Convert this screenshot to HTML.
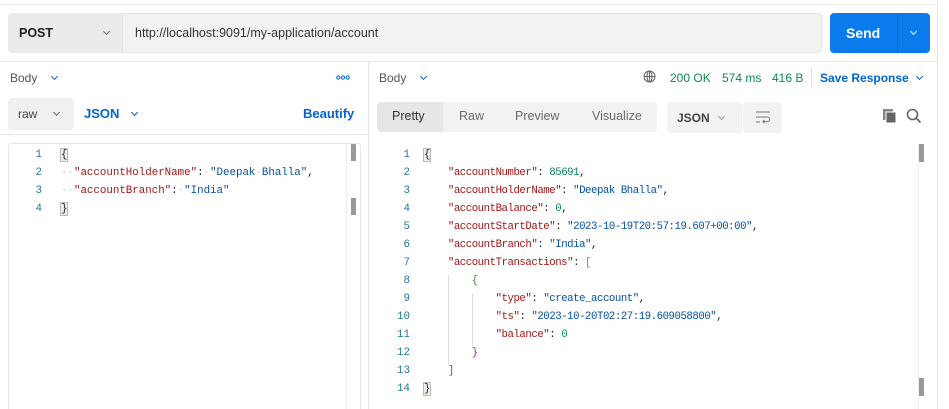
<!DOCTYPE html>
<html><head><style>
*{margin:0;padding:0;box-sizing:border-box}
body{width:949px;height:409px;background:#fff;position:relative;overflow:hidden;font-family:"Liberation Sans",sans-serif;font-size:12px;color:#212121}
.a{position:absolute}
.mono{font-family:"Liberation Mono",monospace;font-size:10.8px;white-space:pre}
.k{color:#a31515}.s{color:#0451a5}.n{color:#098658}.ln{color:#237893;text-align:right;width:30px;letter-spacing:0}
.chev{display:block;width:5px;height:5px;border-right:1.1px solid #6b6b6b;border-bottom:1.1px solid #6b6b6b;transform:rotate(45deg)}
.bchev{border-color:#0265d2}
.tab{position:absolute;top:0;height:29px;line-height:29px;font-size:12.5px;color:#6b6b6b}
</style></head><body>
<div class="a" style="left:0;top:4px;width:937px;height:1px;background:#ececec"></div>
<div class="a" style="left:937px;top:0;width:1px;height:409px;background:#e6e6e6"></div>
<div class="a" style="left:8px;top:13px;width:814px;height:40px;background:#f2f2f2;border:1px solid #e4e4e4;border-radius:4px"></div>
<div class="a" style="left:8px;top:13px;width:115px;height:40px;background:#ebebeb;border-radius:4px 0 0 4px;border-right:1px solid #e0e0e0"></div>
<div class="a" style="left:19px;top:26px;font-weight:bold;font-size:12.5px;color:#212121">POST</div>
<div class="a" style="left:104px;top:29px"><span class="chev"></span></div>
<div class="a" style="left:135px;top:26px;font-size:12.5px;color:#333">http://localhost:9091/my-application/account</div>
<div class="a" style="left:830px;top:13px;width:100px;height:40px;background:#097bed;border-radius:4px"></div>
<div class="a" style="left:897px;top:13px;width:1px;height:40px;background:#0867cc"></div>
<div class="a" style="left:846px;top:25px;font-weight:bold;font-size:14px;color:#fff">Send</div>
<div class="a" style="left:911px;top:29px"><span class="chev" style="border-color:#fff"></span></div>
<div class="a" style="left:0;top:61px;width:937px;height:1px;background:#e6e6e6"></div>
<div class="a" style="left:368px;top:62px;width:1px;height:347px;background:#e6e6e6"></div>
<div class="a" style="left:10px;top:71px;color:#555">Body</div>
<div class="a" style="left:52px;top:74px"><span class="chev bchev"></span></div>
<svg class="a" style="left:336px;top:75px" width="14" height="5" viewBox="0 0 14 5" fill="none" stroke="#0265d2" stroke-width="1"><circle cx="2.3" cy="2.5" r="1.6"/><circle cx="7" cy="2.5" r="1.6"/><circle cx="11.7" cy="2.5" r="1.6"/></svg>
<div class="a" style="left:8px;top:98px;width:66px;height:32px;background:#f0f0f0;border-radius:4px"></div>
<div class="a" style="left:18px;top:107px;color:#444">raw</div>
<div class="a" style="left:54px;top:110px"><span class="chev"></span></div>
<div class="a" style="left:84px;top:106px;color:#0265d2;font-weight:bold;font-size:13px">JSON</div>
<div class="a" style="left:132px;top:110px"><span class="chev bchev"></span></div>
<div class="a" style="left:303px;top:106px;color:#0265d2;font-weight:bold;font-size:13px">Beautify</div>
<div class="a" style="left:0;top:134px;width:368px;height:1px;background:#e6e6e6"></div>
<div class="a" style="left:8px;top:143px;width:353px;height:266px;border:1px solid #e6e6e6;border-bottom:none;border-radius:3px 3px 0 0"></div>
<div class="a" style="left:351px;top:144px;width:5px;height:17px;background:#999"></div>
<div class="a" style="left:351px;top:198px;width:5px;height:17px;background:#999"></div>
<div class="a" style="left:346px;top:144px;width:1px;height:265px;background:#eee"></div>
<div class="a mono" style="left:12px;top:146px;line-height:18px"><div class="ln">1
2
3
4</div></div>
<div class="a mono" style="left:61px;top:146px;line-height:18px"><span style="background:#eef0e8;outline:1px solid #bbb">{</span>
<span style="color:#ccc">··</span><span class="k">"accountHolderName"</span>:<span style="color:#ccc">·</span><span class="s">"Deepak<span style="color:#ccc">·</span>Bhalla"</span>,
<span style="color:#ccc">··</span><span class="k">"accountBranch"</span>:<span style="color:#ccc">·</span><span class="s">"India"</span>
<span style="background:#eef0e8;outline:1px solid #bbb">}</span></div>
<div class="a" style="left:379px;top:71px;color:#555">Body</div>
<div class="a" style="left:421px;top:74px"><span class="chev bchev"></span></div>
<svg class="a" style="left:643px;top:70px" width="13" height="13" viewBox="0 0 13 13" fill="none" stroke="#666" stroke-width="1"><circle cx="6.5" cy="6.5" r="5.5"/><ellipse cx="6.5" cy="6.5" rx="2.5" ry="5.5"/><line x1="1" y1="6.5" x2="12" y2="6.5"/><line x1="6.5" y1="1" x2="6.5" y2="12"/></svg>
<div class="a" style="left:670px;top:71px;color:#0c8a4c">200 OK</div>
<div class="a" style="left:722px;top:71px;color:#0c8a4c">574 ms</div>
<div class="a" style="left:772px;top:71px;color:#0c8a4c">416 B</div>
<div class="a" style="left:811px;top:67px;width:1px;height:20px;background:#e0e0e0"></div>
<div class="a" style="left:820px;top:71px;color:#0265d2;font-weight:bold;font-size:12px">Save Response</div>
<div class="a" style="left:917px;top:74px"><span class="chev bchev"></span></div>
<div class="a" style="left:377px;top:102px;width:280px;height:30px;background:#f2f2f2;border-radius:4px"></div>
<div class="a" style="left:377px;top:102px;width:66px;height:30px;background:#e6e6e6;border-radius:4px 0 0 4px"></div>
<div class="a" style="left:377px;top:102px;width:280px;height:30px">
<div class="tab" style="left:15px;color:#333">Pretty</div>
<div class="tab" style="left:82px">Raw</div>
<div class="tab" style="left:138px">Preview</div>
<div class="tab" style="left:215px">Visualize</div></div>
<div class="a" style="left:667px;top:102px;width:75px;height:31px;background:#f2f2f2;border-radius:4px"></div>
<div class="a" style="left:677px;top:111px;font-weight:bold;color:#444;font-size:12px">JSON</div>
<div class="a" style="left:719px;top:114px"><span class="chev" style="border-color:#999"></span></div>
<div class="a" style="left:743px;top:102px;width:39px;height:31px;background:#f2f2f2;border-radius:4px"></div>
<svg class="a" style="left:755px;top:110px" width="16" height="14" viewBox="0 0 16 14" fill="none" stroke="#777" stroke-width="1"><line x1="1" y1="2" x2="15" y2="2"/><path d="M1 7H12.5a2.3 2.3 0 0 1 0 4.6H8"/><path d="M9.5 10l-1.7 1.6 1.7 1.6"/><line x1="1" y1="12" x2="5" y2="12"/></svg>
<svg class="a" style="left:882px;top:108px" width="16" height="16" viewBox="0 0 16 16"><rect x="1" y="1" width="10" height="11" fill="#888"/><rect x="4" y="4" width="10" height="11" fill="#666" stroke="#fff" stroke-width="1"/></svg>
<svg class="a" style="left:906px;top:108px" width="16" height="16" viewBox="0 0 16 16" fill="none" stroke="#666" stroke-width="1.6"><circle cx="6.5" cy="6.5" r="5"/><line x1="10" y1="10" x2="14.5" y2="14.5"/></svg>
<div class="a" style="left:918px;top:143px;width:1px;height:266px;background:#eee"></div>
<div class="a" style="left:919px;top:144px;width:5px;height:18px;background:#999"></div>
<div class="a" style="left:919px;top:378px;width:5px;height:18px;background:#999"></div>
<div class="a" style="left:448px;top:275px;width:1px;height:90px;background:#ddd"></div>
<div class="a" style="left:472px;top:293px;width:1px;height:54px;background:#ddd"></div>
<div class="a mono" style="left:380px;top:146px;line-height:18px"><div class="ln">1
2
3
4
5
6
7
8
9
10
11
12
13
14</div></div>
<div class="a mono" style="left:424px;top:146px;line-height:18px;font-size:10.7px;letter-spacing:-0.45px"><span style="background:#eef0e8;outline:1px solid #bbb">{</span>
    <span class="k">"accountNumber"</span>: <span class="n">85691</span>,
    <span class="k">"accountHolderName"</span>: <span class="s">"Deepak Bhalla"</span>,
    <span class="k">"accountBalance"</span>: <span class="n">0</span>,
    <span class="k">"accountStartDate"</span>: <span class="s">"2023-10-19T20:57:19.607+00:00"</span>,
    <span class="k">"accountBranch"</span>: <span class="s">"India"</span>,
    <span class="k">"accountTransactions"</span>: <span style="color:#b8860b">[</span>
        <span style="color:#319331">{</span>
            <span class="k">"type"</span>: <span class="s">"create_account"</span>,
            <span class="k">"ts"</span>: <span class="s">"2023-10-20T02:27:19.609058800"</span>,
            <span class="k">"balance"</span>: <span class="n">0</span>
        <span style="color:#7b3fa0">}</span>
    <span style="color:#7b3fa0">]</span>
<span style="background:#eef0e8;outline:1px solid #bbb">}</span></div>
</body></html>
